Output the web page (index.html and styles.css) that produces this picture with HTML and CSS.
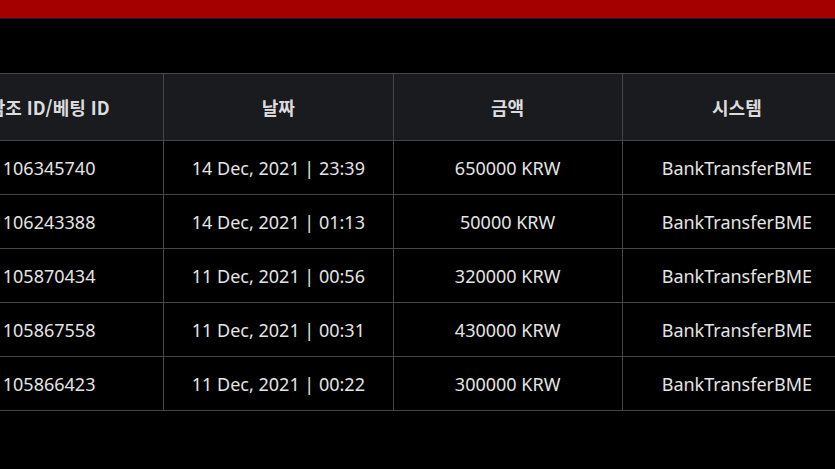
FILE: index.html
```html
<!DOCTYPE html>
<html lang="ko">
<head>
<meta charset="utf-8">
<title>History</title>
<link rel="stylesheet" href="styles.css">
</head>
<body>
<div class="topbar"></div>
<main class="content">
  <table class="history">
    <thead>
      <tr>
        <th>참조 ID/베팅 ID</th>
        <th>날짜</th>
        <th>금액</th>
        <th>시스템</th>
      </tr>
    </thead>
    <tbody>
      <tr><td>106345740</td><td>14 Dec, 2021 | 23:39</td><td>650000 KRW</td><td>BankTransferBME</td></tr>
      <tr><td>106243388</td><td>14 Dec, 2021 | 01:13</td><td>50000 KRW</td><td>BankTransferBME</td></tr>
      <tr><td>105870434</td><td>11 Dec, 2021 | 00:56</td><td>320000 KRW</td><td>BankTransferBME</td></tr>
      <tr><td>105867558</td><td>11 Dec, 2021 | 00:31</td><td>430000 KRW</td><td>BankTransferBME</td></tr>
      <tr><td>105866423</td><td>11 Dec, 2021 | 00:22</td><td>300000 KRW</td><td>BankTransferBME</td></tr>
    </tbody>
  </table>
</main>
</body>
</html>
```

FILE: styles.css
```css
html, body {
  margin: 0;
  padding: 0;
  background: #000;
  overflow: hidden;
}
body {
  font-family: "Noto Sans CJK KR", "Noto Sans", sans-serif;
  color: #e2e2e2;
}
.topbar {
  height: 18px;
  background: #a50000;
  border-bottom: 1px solid #1c1c22;
}
.content {
  padding-top: 54px;
}
.history {
  width: 918px;
  margin-left: -66px;
  table-layout: fixed;
  border-collapse: collapse;
}
.history th,
.history td {
  border: 1px solid #45464a;
  text-align: center;
  padding: 0;
  white-space: nowrap;
}
.history th {
  height: 66px;
  background: #1a1b1f;
  font-size: 18px;
  font-weight: 700;
  color: #dcdcdc;
}
.history td {
  height: 53px;
  font-family: "Noto Sans", "Noto Sans CJK KR", sans-serif;
  font-size: 18px;
  font-weight: 400;
  color: #e4e4e4;
}
```
